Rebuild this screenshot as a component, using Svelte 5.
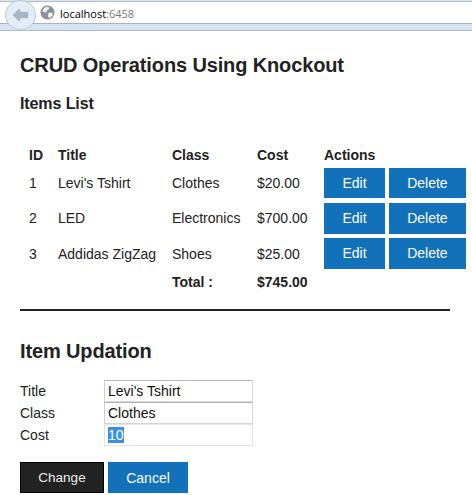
<script>
    let items = [
        { id: 1, title: "Levi's Tshirt", cls: 'Clothes', cost: '$20.00' },
        { id: 2, title: 'LED', cls: 'Electronics', cost: '$700.00' },
        { id: 3, title: 'Addidas ZigZag', cls: 'Shoes', cost: '$25.00' }
    ];
</script>

<div class="toolbar">
    <div class="back">
        <svg width="22" height="20" viewBox="0 0 22 20">
            <path d="M9.5 4.5 L3.5 10 L9.5 15.5 L9.5 12.5 L17.5 12.5 L17.5 7.5 L9.5 7.5 Z" fill="#a6b6c6" stroke="#a6b6c6" stroke-width="1.5" stroke-linejoin="round" />
        </svg>
    </div>
    <div class="address">
        <svg width="15" height="15" viewBox="0 0 16 16">
            <circle cx="8" cy="8" r="7.5" fill="#8d9299" />
            <path d="M6 2 L10 2.5 L9 5 L6.5 6 L7.5 8 L4 7.5 L2.5 5.5 Z M9 8.5 L13 8 L13.5 11 L10 14 L8.5 12 Z" fill="#f1f2f3" />
        </svg>
        <span class="host">localhost<span class="port">:6458</span></span>
    </div>
</div>

<main>
    <h1>CRUD Operations Using Knockout</h1>
    <h2>Items List</h2>

    <table>
        <colgroup>
            <col class="c-id" />
            <col class="c-title" />
            <col class="c-class" />
            <col class="c-cost" />
            <col />
        </colgroup>
        <thead>
            <tr>
                <th class="first">ID</th>
                <th>Title</th>
                <th>Class</th>
                <th>Cost</th>
                <th>Actions</th>
            </tr>
        </thead>
        <tbody>
            {#each items as item}
                <tr>
                    <td class="first">{item.id}</td>
                    <td>{item.title}</td>
                    <td>{item.cls}</td>
                    <td>{item.cost}</td>
                    <td class="actions">
                        <button class="btn edit">Edit</button>
                        <button class="btn delete">Delete</button>
                    </td>
                </tr>
            {/each}
            <tr class="total">
                <td></td>
                <td></td>
                <td>Total :</td>
                <td>$745.00</td>
                <td></td>
            </tr>
        </tbody>
    </table>

    <hr />

    <h1 class="update">Item Updation</h1>

    <div class="form">
        <label for="title">Title</label>
        <input id="title" value="Levi's Tshirt" />
        <label for="class">Class</label>
        <input id="class" value="Clothes" />
        <label for="cost">Cost</label>
        <div class="input faded" id="cost"><span class="selected">10</span></div>
    </div>

    <div class="buttons">
        <button class="btn change">Change</button>
        <button class="btn cancel">Cancel</button>
    </div>
</main>

<style>
    :global(body) {
        margin: 0;
        background: #fff;
        color: #222;
        font-family: "Liberation Sans", Arial, sans-serif;
        font-size: 14px;
    }

    .toolbar {
        height: 31px;
        box-sizing: border-box;
        padding: 1px 0 7px 0;
        background: #d5e5f4;
        border-bottom: 1px solid #a9bed3;
        position: relative;
    }

    .address {
        height: 23px;
        box-sizing: border-box;
        background: #fff;
        border-top: 1px solid #b4bdc6;
        border-bottom: 1px solid #a5b5c6;
        padding-left: 40px;
        display: flex;
        align-items: center;
        gap: 5px;
    }

    .back {
        position: absolute;
        left: 5px;
        top: 0;
        width: 29px;
        height: 28px;
        border-radius: 50%;
        background: #e3edf7;
        border: 1px solid #b9c9da;
        display: flex;
        align-items: center;
        justify-content: center;
        z-index: 1;
    }

    .host {
        font-family: "Open Sans", sans-serif;
        font-size: 11px;
        color: #000;
        margin-top: 2px;
    }

    .port {
        color: #777;
    }

    main {
        padding: 0 20px;
    }

    h1 {
        font-size: 20px;
        line-height: 24px;
        margin: 22px 0 0 0;
        letter-spacing: -0.13px;
    }

    h2 {
        font-size: 16px;
        line-height: 20px;
        margin: 17px 0 0 0;
        letter-spacing: -0.1px;
    }

    table {
        border-collapse: separate;
        border-spacing: 0;
        table-layout: fixed;
        margin: 25px 0 0 0;
        width: 450px;
    }

    .c-id {
        width: 30px;
    }

    .c-title {
        width: 114px;
    }

    .c-class {
        width: 85px;
    }

    .c-cost {
        width: 67px;
    }

    th {
        text-align: left;
        font-size: 14px;
        padding: 8px 8px 2px 8px;
        line-height: 16px;
    }

    td {
        padding: 2.5px 8px;
        line-height: 30px;
        white-space: nowrap;
    }

    .first {
        padding-left: 9px;
    }

    td.actions {
        padding-right: 0;
    }

    /* last two rows have slightly taller buttons */
    tbody tr:nth-child(n+2) td.actions {
        padding-bottom: 1.5px;
    }

    tbody tr:nth-child(n+2) .btn {
        height: 31px;
    }

    tbody tr:nth-child(3) td:not(.actions) {
        padding-top: 3.5px;
        padding-bottom: 1.5px;
    }

    .total td {
        font-weight: bold;
        line-height: 16px;
        padding-top: 4px;
        padding-bottom: 0;
    }

    .btn {
        border: none;
        margin: 0;
        color: #fff;
        background: #1272b9;
        font-family: inherit;
        font-size: 14px;
        height: 30px;
        padding: 0;
        vertical-align: top;
    }

    .edit {
        width: 61px;
    }

    .delete {
        width: 77px;
    }

    hr {
        border: none;
        height: 2px;
        width: 430px;
        margin: 19px 0 0 0;
        background: #222;
    }

    .update {
        margin-top: 28px;
    }

    .form {
        display: grid;
        grid-template-columns: 84px 149px;
        margin-top: 17px;
        row-gap: 0;
        align-items: center;
    }

    label {
        font-size: 14px;
    }

    input, .input {
        box-sizing: border-box;
        height: 22px;
        width: 149px;
        margin: 0;
        padding: 0 3px;
        font-family: inherit;
        font-size: 14px;
        color: #111;
        background: #fff;
        border: 1px solid #d6d6d6;
        border-top-color: #b5b5b5;
        border-left-color: #cfcfcf;
        border-radius: 0;
        outline: none;
        line-height: 20px;
    }

    .selected {
        background: #3a8fe8;
        color: #fff;
    }

    .faded {
        border-color: #e4e4e4;
    }

    .buttons {
        display: flex;
        gap: 4px;
        margin-top: 16px;
    }

    .change {
        width: 84px;
        height: 31px;
        background: #222;
        border: 1px solid #000;
        font-size: 13.5px;
        color: #eee;
    }

    .cancel {
        width: 80px;
        height: 31px;
    }
</style>
